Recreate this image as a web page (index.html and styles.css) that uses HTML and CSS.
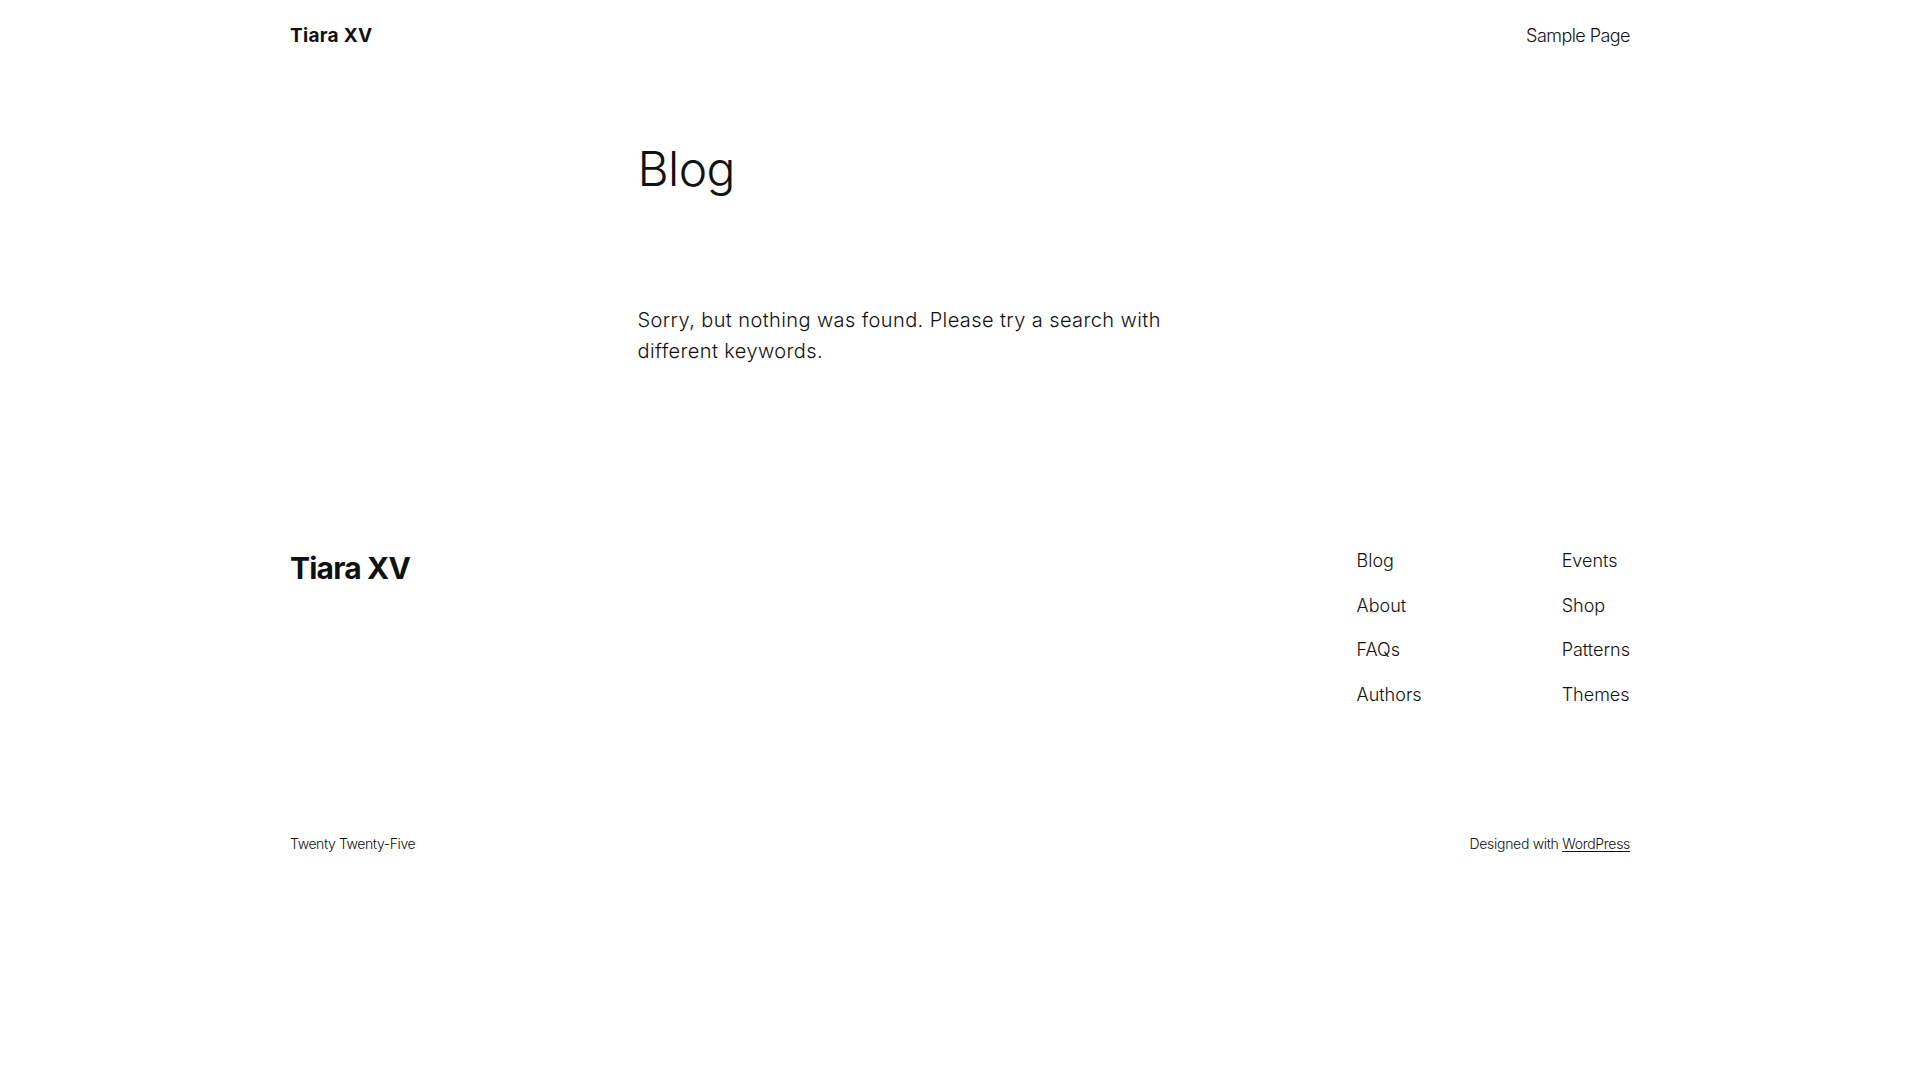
FILE: index.html
```html
<!DOCTYPE html>
<html lang="en">
<head>
<meta charset="utf-8">
<title>Blog – Tiara XV</title>
<link rel="stylesheet" href="styles.css">
</head>
<body>
<header class="site-header">
  <div class="wide row">
    <a class="site-title" href="#">Tiara XV</a>
    <nav class="header-nav"><a href="#">Sample Page</a></nav>
  </div>
</header>
<main class="site-main">
  <div class="content">
    <h1 class="page-title">Blog</h1>
    <p class="no-results">Sorry, but nothing was found. Please try a search with different keywords.</p>
  </div>
</main>
<footer class="site-footer">
  <div class="wide footer-top">
    <a class="footer-title" href="#">Tiara XV</a>
    <div class="footer-navs">
      <nav class="footer-col">
        <a href="#">Blog</a>
        <a href="#">About</a>
        <a href="#">FAQs</a>
        <a href="#">Authors</a>
      </nav>
      <nav class="footer-col">
        <a href="#">Events</a>
        <a href="#">Shop</a>
        <a href="#">Patterns</a>
        <a href="#">Themes</a>
      </nav>
    </div>
  </div>
  <div class="wide footer-bottom">
    <p class="credit">Twenty Twenty-Five</p>
    <p class="credit">Designed with <a class="credit-link" href="#">WordPress</a></p>
  </div>
</footer>
</body>
</html>
```
FILE: styles.css
```css
html, body {
  margin: 0;
  padding: 0;
  background: #ffffff;
}
body {
  font-family: Inter, "Noto Sans", "Liberation Sans", sans-serif;
  font-weight: 300;
  color: #111111;
  -webkit-font-smoothing: antialiased;
}
a {
  color: inherit;
  text-decoration: none;
}
.wide {
  width: 1340px;
  margin: 0 auto;
}
.row {
  display: flex;
  justify-content: space-between;
  align-items: center;
}
.site-header {
  padding: 23px 0 20px;
}
.site-title {
  font-size: 19px;
  line-height: 26px;
  font-weight: 700;
  letter-spacing: 0.3px;
}
.header-nav a {
  font-size: 18px;
  line-height: 26px;
  font-weight: 300;
  letter-spacing: -0.55px;
}
.site-main {
  padding-top: 71px;
}
.content {
  width: 645px;
  margin: 0 auto;
}
.page-title {
  margin: 0;
  font-size: 48px;
  line-height: 57.6px;
  font-weight: 300;
  letter-spacing: -0.6px;
}
.no-results {
  margin: 107px 0 0;
  max-width: 570px;
  font-size: 20px;
  line-height: 31.7px;
  letter-spacing: 0.4px;
}
.site-footer {
  padding-top: 179px;
}
.footer-top {
  display: flex;
  justify-content: space-between;
  align-items: flex-start;
}
.footer-title {
  font-size: 30px;
  line-height: 42px;
  font-weight: 700;
  letter-spacing: -0.8px;
  margin-top: 0;
}
.footer-navs {
  display: flex;
  gap: 140px;
  margin-top: 1px;
}
.footer-col {
  display: flex;
  flex-direction: column;
  gap: 18.5px;
}
.footer-col a {
  font-size: 18px;
  line-height: 26px;
  letter-spacing: 0px;
}
.footer-bottom {
  display: flex;
  justify-content: space-between;
  margin-top: 126px;
}
.credit {
  margin: 0;
  font-size: 14px;
  line-height: 20px;
  letter-spacing: -0.4px;
}
.credit + .credit {
  letter-spacing: -0.3px;
}
.credit-link {
  text-decoration: underline;
  text-underline-offset: 2px;
  text-decoration-thickness: 1px;
}
```
